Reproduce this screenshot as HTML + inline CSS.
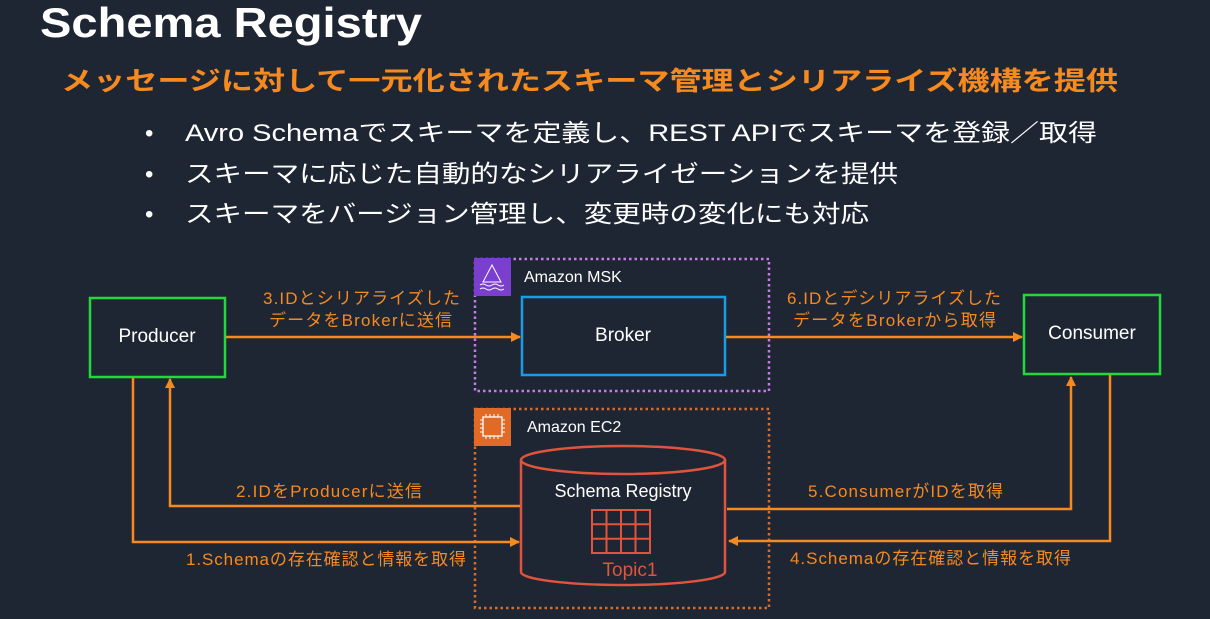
<!DOCTYPE html>
<html><head><meta charset="utf-8"><style>
html,body{margin:0;padding:0;background:#1f2633;width:1210px;height:619px;overflow:hidden}
svg{display:block}
text{font-family:"Liberation Sans","Noto Sans CJK JP",sans-serif}
</style></head><body>
<svg width="1210" height="619" viewBox="0 0 1210 619">
<rect width="1210" height="619" fill="#1f2633"/>
<text x="40" y="37" font-size="42" font-weight="bold" fill="#fff" textLength="382" lengthAdjust="spacingAndGlyphs">Schema Registry</text>
<text x="61" y="90" font-size="26" font-weight="bold" fill="#f68a1f" textLength="1057" lengthAdjust="spacingAndGlyphs">メッセージに対して一元化されたスキーマ管理とシリアライズ機構を提供</text>
<g font-size="24" fill="#fff">
<text x="145" y="141">•</text><text x="185" y="141" textLength="912" lengthAdjust="spacingAndGlyphs">Avro Schemaでスキーマを定義し、REST APIでスキーマを登録／取得</text>
<text x="145" y="182">•</text><text x="185" y="182" textLength="713" lengthAdjust="spacingAndGlyphs">スキーマに応じた自動的なシリアライゼーションを提供</text>
<text x="145" y="222">•</text><text x="185" y="222" textLength="684" lengthAdjust="spacingAndGlyphs">スキーマをバージョン管理し、変更時の変化にも対応</text>
</g>
<defs><marker id="a" viewBox="0 0 10 10" refX="9" refY="5" markerWidth="4" markerHeight="4" orient="auto"><path d="M0 0L10 5L0 10z" fill="#f68a1f"/></marker></defs>
<rect x="90" y="298" width="135" height="79" fill="none" stroke="#22d83a" stroke-width="2.5"/>
<text x="157" y="342" font-size="19" fill="#fff" text-anchor="middle">Producer</text>
<rect x="1024" y="295" width="136" height="79" fill="none" stroke="#22d83a" stroke-width="2.5"/>
<text x="1092" y="339" font-size="19" fill="#fff" text-anchor="middle">Consumer</text>
<rect x="475" y="259" width="294" height="132" fill="none" stroke="#c77be8" stroke-width="2.5" stroke-dasharray="2.5 3"/>
<rect x="474" y="258" width="37" height="38" fill="#7b3fd0"/>
<path d="M492 265l-9 17h18z M480 285q3-2 6 0t6 0 6 0 6 0 M480 289q3-2 6 0t6 0 6 0 6 0" fill="none" stroke="#fff" stroke-width="1"/>
<text x="524" y="282" font-size="16" fill="#fff">Amazon MSK</text>
<rect x="522" y="297" width="203" height="78" fill="none" stroke="#1a9be6" stroke-width="2.5"/>
<text x="623" y="341" font-size="19" fill="#fff" text-anchor="middle">Broker</text>
<rect x="475" y="409" width="294" height="199" fill="none" stroke="#d96a2a" stroke-width="2.5" stroke-dasharray="2.5 3"/>
<rect x="474" y="408" width="37" height="38" fill="#e06a26"/>
<rect x="483" y="417" width="19" height="19" fill="none" stroke="#fff" stroke-width="1.3"/>
<path d="M486 414v3M490 414v3M494 414v3M498 414v3M486 436v3M490 436v3M494 436v3M498 436v3M480 420h3M480 424h3M480 428h3M480 432h3M502 420h3M502 424h3M502 428h3M502 432h3" stroke="#fff" stroke-width="1"/>
<text x="527" y="432" font-size="16" fill="#fff">Amazon EC2</text>
<path d="M521 460v112a102 13 0 0 0 204 0v-112" fill="none" stroke="#e0533c" stroke-width="2.5"/>
<ellipse cx="623" cy="460" rx="102" ry="14" fill="none" stroke="#e0533c" stroke-width="2.5"/>
<text x="623" y="497" font-size="18" fill="#fff" text-anchor="middle">Schema Registry</text>
<g stroke="#e0533c" stroke-width="2" fill="none"><rect x="592" y="510" width="58" height="43"/><path d="M606.5 510v43M621 510v43M635.5 510v43M592 524.3h58M592 538.7h58"/></g>
<text x="630" y="576" font-size="19" fill="#e0533c" text-anchor="middle">Topic1</text>
<g stroke="#f68a1f" stroke-width="2.5" fill="none">
<path d="M226 337H520" marker-end="url(#a)"/>
<path d="M726 337H1022" marker-end="url(#a)"/>
<path d="M133 378V542H519" marker-end="url(#a)"/>
<path d="M520 506H170V379" marker-end="url(#a)"/>
<path d="M727 509H1071V377" marker-end="url(#a)"/>
<path d="M1110 375V541H729" marker-end="url(#a)"/>
</g>
<g font-size="17" fill="#f68a1f" lengthAdjust="spacingAndGlyphs">
<text x="263" y="304" textLength="197">3.IDとシリアライズした</text>
<text x="269" y="326" textLength="183">データをBrokerに送信</text>
<text x="787" y="304" textLength="214">6.IDとデシリアライズした</text>
<text x="793" y="326" textLength="203">データをBrokerから取得</text>
<text x="236" y="497" textLength="186">2.IDをProducerに送信</text>
<text x="808" y="497" textLength="195">5.ConsumerがIDを取得</text>
<text x="186" y="565" textLength="280">1.Schemaの存在確認と情報を取得</text>
<text x="790" y="564" textLength="281">4.Schemaの存在確認と情報を取得</text>
</g>
</svg>
</body></html>
